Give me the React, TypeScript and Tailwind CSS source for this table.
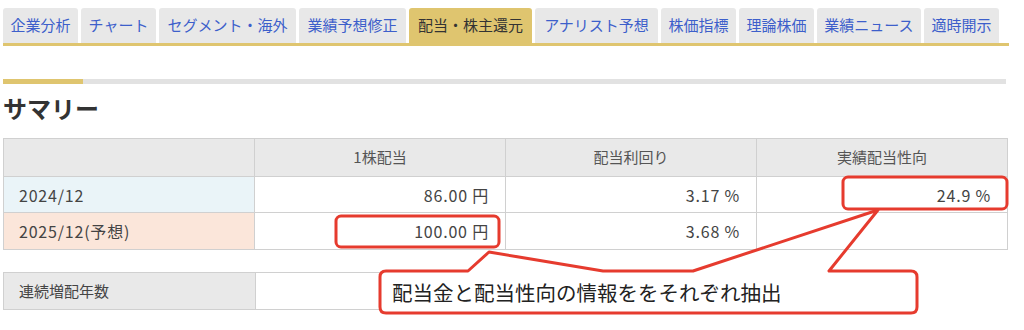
import React from 'react';

const tabs = [
  { label: '企業分析', w: 'w-[75px]' },
  { label: 'チャート', w: 'w-[75px]' },
  { label: 'セグメント・海外', w: 'w-[137px]' },
  { label: '業績予想修正', w: 'w-[107px]' },
  { label: '配当・株主還元', w: 'w-[123px]', active: true },
  { label: 'アナリスト予想', w: 'w-[123px]' },
  { label: '株価指標', w: 'w-[75px]' },
  { label: '理論株価', w: 'w-[75px]' },
  { label: '業績ニュース', w: 'w-[104px]' },
  { label: '適時開示', w: 'w-[75px]' },
];

const rows = [
  { label: '2024/12', bg: 'bg-[#eaf4f8]', dps: '86.00 円', yld: '3.17 %', payout: '24.9 %', h: 'h-[36px]' },
  { label: '2025/12(予想)', bg: 'bg-[#fbe6da]', dps: '100.00 円', yld: '3.68 %', payout: '', h: 'h-[37px]' },
];

function Callout() {
  const red = '#e63b2e';
  return (
    <>
      <svg className="absolute left-0 top-0 pointer-events-none" width="1024" height="330">
        <rect x="336" y="216" width="163" height="31" rx="5" fill="none" stroke={red} strokeWidth="3" />
        <rect x="843" y="177" width="164" height="32" rx="5" fill="none" stroke={red} strokeWidth="3" />
        <rect x="380" y="271" width="537" height="42" rx="6" fill="#ffffff" />
        <path
          d="M 386 271 L 468 271 L 489 252 L 603 271 L 693 271 L 878 210 L 829 271 L 911 271 Q 917 271 917 277 L 917 307 Q 917 313 911 313 L 386 313 Q 380 313 380 307 L 380 277 Q 380 271 386 271 Z"
          fill="none"
          stroke={red}
          strokeWidth="3"
          strokeLinejoin="round"
        />
      </svg>
      <div className="absolute left-[392px] top-[278px] text-[20.5px] leading-[28px] text-[#222]">
        配当金と配当性向の情報ををそれぞれ抽出
      </div>
    </>
  );
}

export default function App() {
  return (
    <div
      className="relative h-[330px] w-[1024px] overflow-hidden bg-white px-[3px] pt-[8px]"
      style={{ fontFamily: '"Noto Sans CJK JP", "Noto Sans", sans-serif' }}
    >
      {/* Tabs */}
      <div className="flex w-[1006px] gap-[3px] border-b-[3px] border-[#dfc56f]">
        {tabs.map((t) => (
          <div
            key={t.label}
            className={`${t.w} flex h-[35px] items-center justify-center rounded-t-[3px] text-[15px] whitespace-nowrap ${
              t.active ? 'bg-[#dfc56f] text-[#333]' : 'bg-[#e8e8e8] text-[#3d5fcb]'
            }`}
          >
            {t.label}
          </div>
        ))}
      </div>

      {/* Section bar */}
      <div className="mt-[33px] flex h-[5px] w-[1003px] bg-[#e2e2e2]">
        <div className="w-[80px] bg-[#dfc56f]" />
      </div>

      <h2 className="mt-[10px] h-[28px] text-[24px] leading-[28px] font-bold text-[#333]">サマリー</h2>

      {/* Summary table */}
      <table className="mt-[16px] w-[1005px] table-fixed border-collapse text-[15px] text-[#444]">
        <thead>
          <tr className="h-[38px] bg-[#e9e9e9]">
            <th className="border border-[#d0d0d0] font-normal" />
            <th className="border border-[#d0d0d0] font-normal text-[#555]">1株配当</th>
            <th className="border border-[#d0d0d0] font-normal text-[#555]">配当利回り</th>
            <th className="border border-[#d0d0d0] font-normal text-[#555]">実績配当性向</th>
          </tr>
        </thead>
        <tbody>
          {rows.map((r) => (
            <tr key={r.label} className={r.h}>
              <td className={`border border-[#d0d0d0] pl-[15px] text-[16px] tracking-[0.8px] ${r.bg}`}>{r.label}</td>
              <td className="border border-[#d0d0d0] pr-[16px] text-right text-[16px] tracking-[0.8px]">{r.dps}</td>
              <td className="border border-[#d0d0d0] pr-[16px] text-right text-[16px] tracking-[0.8px]">{r.yld}</td>
              <td className="border border-[#d0d0d0] pr-[16px] text-right text-[16px] tracking-[0.8px]">{r.payout}</td>
            </tr>
          ))}
        </tbody>
      </table>

      <table className="mt-[22px] w-[504px] table-fixed border-collapse text-[15px] text-[#444]">
        <tbody>
          <tr className="h-[37px]">
            <td className="w-[252px] border border-[#d0d0d0] bg-[#e9e9e9] pl-[15px]">連続増配年数</td>
            <td className="border border-[#d0d0d0]" />
          </tr>
        </tbody>
      </table>

      <Callout />
    </div>
  );
}
